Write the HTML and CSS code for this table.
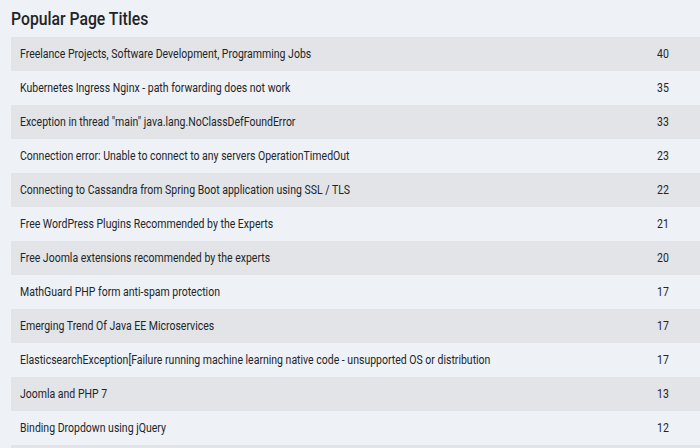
FILE: index.html
```html
<!DOCTYPE html>
<html>
<head>
<meta charset="utf-8">
<link rel="stylesheet" href="styles.css">
</head>
<body>
<div class="page">
  <h2 class="title"><span class="squeeze">Popular Page Titles</span></h2>
  <div class="list">
    <div class="row"><span class="name"><span class="squeeze">Freelance Projects, Software Development, Programming Jobs</span></span><span class="count"><span class="squeeze">40</span></span></div>
    <div class="row"><span class="name"><span class="squeeze">Kubernetes Ingress Nginx - path forwarding does not work</span></span><span class="count"><span class="squeeze">35</span></span></div>
    <div class="row"><span class="name"><span class="squeeze">Exception in thread "main" java.lang.NoClassDefFoundError</span></span><span class="count"><span class="squeeze">33</span></span></div>
    <div class="row"><span class="name"><span class="squeeze">Connection error: Unable to connect to any servers OperationTimedOut</span></span><span class="count"><span class="squeeze">23</span></span></div>
    <div class="row"><span class="name"><span class="squeeze">Connecting to Cassandra from Spring Boot application using SSL / TLS</span></span><span class="count"><span class="squeeze">22</span></span></div>
    <div class="row"><span class="name"><span class="squeeze">Free WordPress Plugins Recommended by the Experts</span></span><span class="count"><span class="squeeze">21</span></span></div>
    <div class="row"><span class="name"><span class="squeeze">Free Joomla extensions recommended by the experts</span></span><span class="count"><span class="squeeze">20</span></span></div>
    <div class="row"><span class="name"><span class="squeeze">MathGuard PHP form anti-spam protection</span></span><span class="count"><span class="squeeze">17</span></span></div>
    <div class="row"><span class="name"><span class="squeeze">Emerging Trend Of Java EE Microservices</span></span><span class="count"><span class="squeeze">17</span></span></div>
    <div class="row"><span class="name"><span class="squeeze">ElasticsearchException[Failure running machine learning native code - unsupported OS or distribution</span></span><span class="count"><span class="squeeze">17</span></span></div>
    <div class="row"><span class="name"><span class="squeeze">Joomla and PHP 7</span></span><span class="count"><span class="squeeze">13</span></span></div>
    <div class="row"><span class="name"><span class="squeeze">Binding Dropdown using jQuery</span></span><span class="count"><span class="squeeze">12</span></span></div>
    <div class="row row-empty"></div>
  </div>
</div>
</body>
</html>
```
FILE: styles.css
```css
html, body {
  margin: 0;
  padding: 0;
  background: #eef1f6;
  overflow: hidden;
}
body {
  font-family: Roboto, "Liberation Sans", sans-serif;
  color: #212529;
}
.page {
  padding: 9px 0 0 11px;
}
.title {
  margin: 0 0 8px 0;
  font-size: 18px;
  font-weight: 500;
  line-height: 20px;
  color: #1f2326;
}
.squeeze {
  display: inline-block;
  white-space: nowrap;
  transform: scaleX(0.875);
  transform-origin: left center;
}
.list {
  display: flex;
  flex-direction: column;
}
.row {
  display: grid;
  grid-template-columns: 1fr 52px;
  height: 34px;
  align-items: center;
  font-size: 12px;
}
.row:nth-child(odd) {
  background: #e2e4e8;
}
.name {
  padding-left: 9px;
  white-space: nowrap;
  overflow: hidden;
}
.count {
  padding-left: 9px;
}
```
